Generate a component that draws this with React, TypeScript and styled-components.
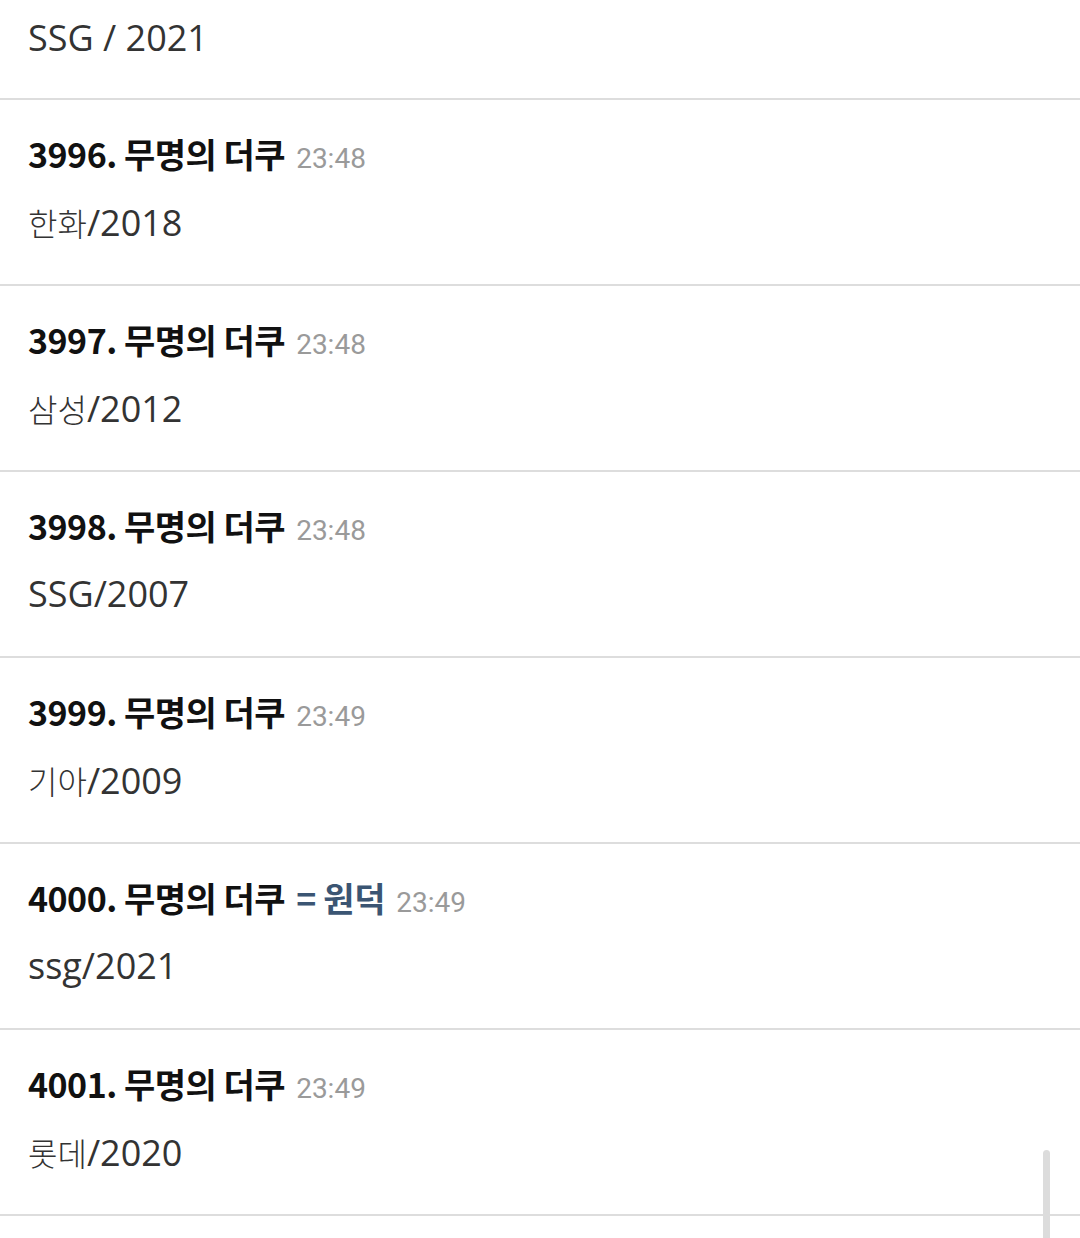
import React from "react";
import styled, { createGlobalStyle } from "styled-components";

const Global = createGlobalStyle`
  html, body { margin: 0; padding: 0; background: #ffffff; }
  body { overflow: hidden; }
`;

const Page = styled.div`
  width: 1080px;
  height: 1238px;
  overflow: hidden;
  background: #fff;
  position: relative;
`;

const List = styled.ul`
  list-style: none;
  margin: 0;
  padding: 0;
`;

const Item = styled.li<{ $partial?: boolean }>`
  display: flex;
  flex-direction: column;
  gap: 24px;
  padding: ${(p) => (p.$partial ? "16px 28px 38px" : "32px 28px 40px")};
  border-bottom: 2px solid #dddddd;
  height: ${(p) => (p.$partial ? "auto" : "186px")};
  box-sizing: border-box;
`;

const Title = styled.div`
  display: flex;
  align-items: baseline;
  gap: 11px;
  height: 44px;
  line-height: 44px;
  white-space: nowrap;
`;

const Name = styled.span`
  font-family: "Noto Sans CJK KR", "Noto Sans", sans-serif;
  font-weight: 700;
  font-size: 34px;
  color: #111;
  letter-spacing: -0.5px;
`;

const Tag = styled.span`
  font-family: "Noto Sans CJK KR", "Noto Sans", sans-serif;
  font-weight: 700;
  font-size: 34px;
  color: #3b5573;
  letter-spacing: -0.3px;
`;

const Time = styled.span`
  font-family: Roboto, "Noto Sans", sans-serif;
  font-size: 28px;
  color: #9a9a9a;
`;

const Body = styled.div`
  font-family: "Open Sans", "Noto Sans CJK KR", sans-serif;
  font-size: 36px;
  font-weight: 400;
  color: #333;
  height: 44px;
  line-height: 44px;
  white-space: nowrap;
`;

const Hangul = styled.span`
  font-family: "Noto Sans CJK KR", sans-serif;
  font-weight: 300;
  font-size: 32px;
  color: #333;
`;

const Scrollbar = styled.div`
  position: absolute;
  left: 1043px;
  top: 1150px;
  width: 7px;
  height: 100px;
  border-radius: 4px 4px 0 0;
  background: #dcdcdc;
`;

type Post = { no: number; time: string; ko?: string; rest: string; tag?: string };

const posts: Post[] = [
  { no: 3996, time: "23:48", ko: "한화", rest: "/2018" },
  { no: 3997, time: "23:48", ko: "삼성", rest: "/2012" },
  { no: 3998, time: "23:48", rest: "SSG/2007" },
  { no: 3999, time: "23:49", ko: "기아", rest: "/2009" },
  { no: 4000, time: "23:49", rest: "ssg/2021", tag: "= 원덕" },
  { no: 4001, time: "23:49", ko: "롯데", rest: "/2020" },
];

export default function App() {
  return (
    <Page>
      <Global />
      <List>
        <Item $partial>
          <Body>SSG / 2021</Body>
        </Item>
        {posts.map((p) => (
          <Item key={p.no}>
            <Title>
              <Name>{p.no}. 무명의 더쿠</Name>
              {p.tag && <Tag>{p.tag}</Tag>}
              <Time>{p.time}</Time>
            </Title>
            <Body>
              {p.ko && <Hangul>{p.ko}</Hangul>}
              {p.rest}
            </Body>
          </Item>
        ))}
      </List>
      <Scrollbar />
    </Page>
  );
}
